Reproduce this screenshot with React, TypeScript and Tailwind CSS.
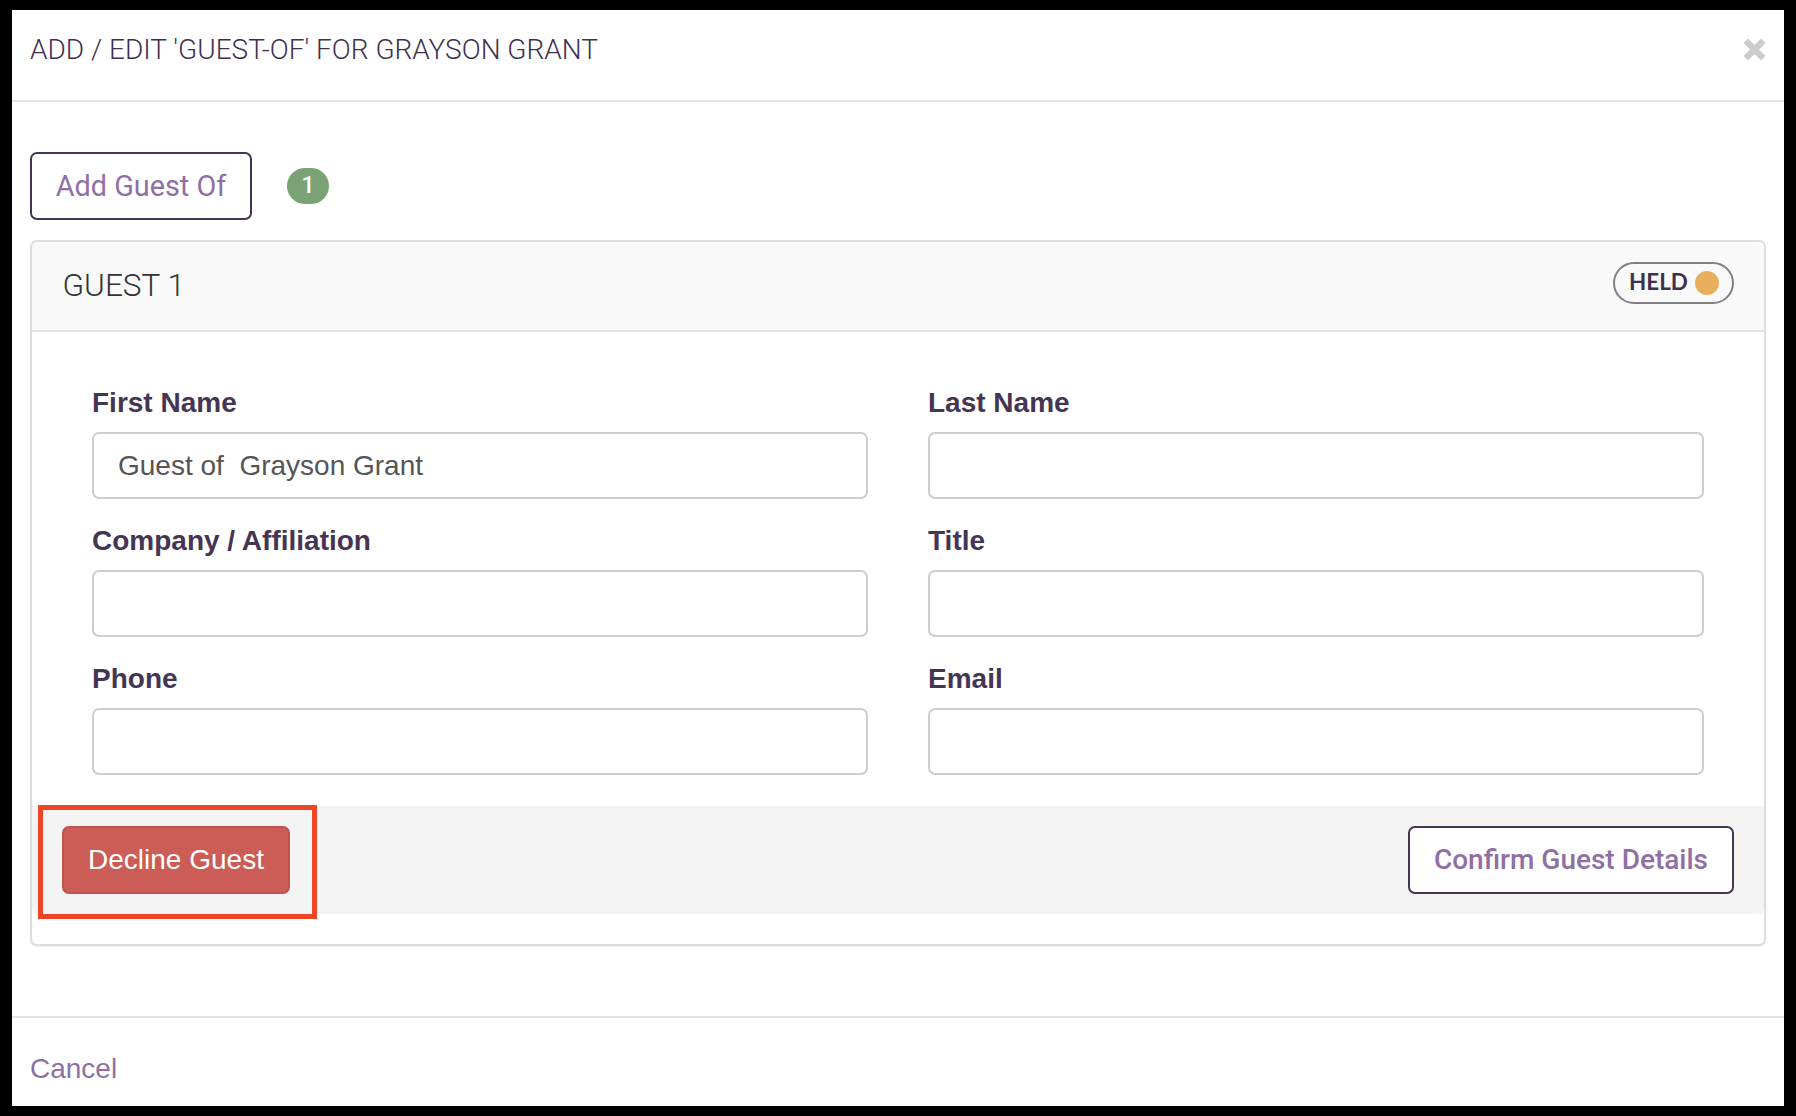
import React from 'react';

const fieldRows = [
    ['First Name', 'Last Name'],
    ['Company / Affiliation', 'Title'],
    ['Phone', 'Email'],
];

function Field({ label, value = '' }: { label: string; value?: string }) {
    return (
        <div className="flex flex-col">
            <label className="h-[40px] mb-[10px] text-[28px] leading-[42px] font-bold text-[#453555] font-['Liberation_Sans',sans-serif]">{label}</label>
            <input
                readOnly
                value={value}
                className="h-[67px] w-full border-2 border-[#cdcdcd] rounded-[7px] bg-white px-[24px] text-[28px] text-[#555555] outline-none font-['Liberation_Sans',sans-serif]"
            />
        </div>
    );
}

export default function App() {
    return (
        <div className="w-[1796px] h-[1116px] bg-black pt-[10px] px-[12px] pb-[10px] font-['Roboto',sans-serif]">
            <div className="relative w-full h-full bg-white flex flex-col">
                {/* Header */}
                <div className="h-[92px] shrink-0 border-b-2 border-[#e5e5e5] flex items-center justify-between pl-[18px] pr-[18px] pb-[10px]">
                    <h1 className="text-[28px] leading-[76px] font-light text-[#403050]">ADD / EDIT 'GUEST-OF' FOR GRAYSON GRANT</h1>
                    <svg className="w-[23px] h-[23px] mt-[-2px]" viewBox="0 0 23 23" fill="#cccccc">
                        <path d="M5 0.5 L11.5 7 L18 0.5 L22.5 5 L16 11.5 L22.5 18 L18 22.5 L11.5 16 L5 22.5 L0.5 18 L7 11.5 L0.5 5 Z" />
                    </svg>
                </div>

                {/* Body */}
                <div className="flex-1 pt-[50px] pl-[18px] pr-[18px]">
                    <div className="flex items-center gap-[35px] mb-[20px]">
                        <button className="h-[68px] w-[222px] border-2 border-[#453552] rounded-[7px] bg-white pt-[1px] text-[28.8px] text-[#8f6fa5]">Add Guest Of</button>
                        <span className="w-[42px] h-[36px] rounded-[18px] bg-[#7aa276] pt-[1px] text-white text-[23px] font-medium flex items-center justify-center">1</span>
                    </div>

                    <div className="border-2 border-[#dedede] rounded-[7px] shadow-[0_1px_2px_rgba(0,0,0,0.08)] bg-white">
                        <div className="h-[90px] border-b-2 border-[#e2e2e2] bg-[#f9f9f9] rounded-t-[6px] flex items-center justify-between pl-[30.5px] pr-[30px]">
                            <span className="text-[31.6px] font-light text-[#333333]">GUEST 1</span>
                            <span className="h-[42px] w-[121px] border-2 border-[#808080] rounded-full flex items-center gap-[7px] pl-[14px] -mt-[6px]">
                                <span className="text-[22.4px] font-bold text-[#403050] font-['Lato',sans-serif] -mt-[2px]">HELD</span>
                                <span className="w-[24px] h-[24px] rounded-full bg-[#e8b05e]" />
                            </span>
                        </div>

                        <div className="grid grid-cols-2 gap-x-[60px] gap-y-[21px] pt-[50px] pb-[31px] px-[60px]">
                            {fieldRows.flat().map((label) => (
                                <Field key={label} label={label} value={label === 'First Name' ? 'Guest of  Grayson Grant' : ''} />
                            ))}
                        </div>

                        <div className="h-[108px] mb-[30px] bg-[#f4f4f4] rounded-b-[6px] flex items-center justify-between px-[30px]">
                            <button className="h-[68px] w-[228px] border-2 border-[#c0534d] rounded-[7px] bg-[#cc5c56] text-white text-[28px] font-['Liberation_Sans',sans-serif]">Decline Guest</button>
                            <button className="h-[68px] w-[326px] border-2 border-[#453552] rounded-[7px] bg-white text-[#8f6fa5] text-[28px] font-medium">Confirm Guest Details</button>
                        </div>
                    </div>
                </div>

                {/* Footer */}
                <div className="h-[90px] shrink-0 border-t-2 border-[#e5e5e5] flex items-center pl-[18px] pt-[13px]">
                    <span className="text-[28px] text-[#8f6fa5] font-['Liberation_Sans',sans-serif]">Cancel</span>
                </div>

                {/* Red annotation box */}
                <div className="absolute left-[26px] top-[795px] w-[279px] h-[114px] border-[5px] border-[#ee4527] pointer-events-none" />
            </div>
        </div>
    );
}
